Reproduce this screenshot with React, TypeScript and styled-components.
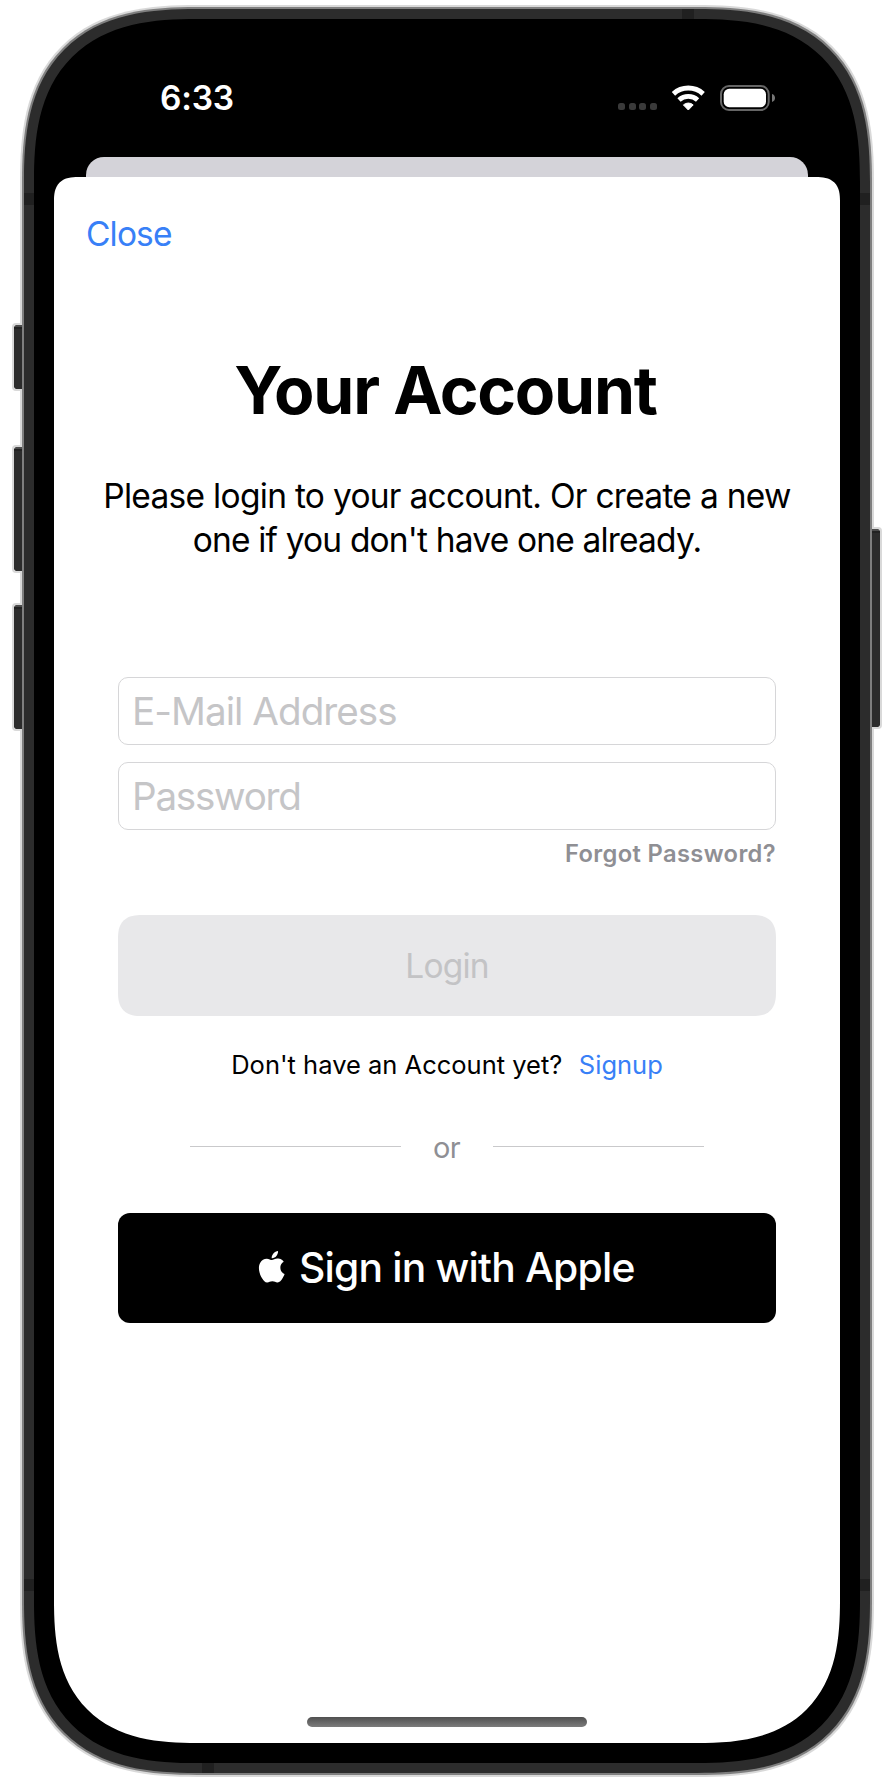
import React from 'react';
import styled, { createGlobalStyle, css } from 'styled-components';
import { SiApple } from 'react-icons/si';

const GlobalStyle = createGlobalStyle`
  *, *::before, *::after { box-sizing: border-box; }
  body { margin: 0; background: #fff; }
  #root { font-family: Inter, 'Liberation Sans', sans-serif; }
  button { font: inherit; letter-spacing: inherit; border: 0; padding: 0; background: none; cursor: pointer; }
`;

const blue = '#3880f7';

/* ---------- device hardware ---------- */

const smooth = (r: number) => css`
  border-radius: ${r * 0.8}px;
  @supports (corner-shape: superellipse(1.38)) {
    border-radius: ${r}px;
    corner-shape: superellipse(1.38);
  }
`;

const Page = styled.main`
  display: flex;
  padding: 5px 20px 2px;
`;

const Device = styled.div`
  position: relative;
  display: flex;
  width: 854px;
  height: 1772px;
  padding: 2px;
  background: #d9d9d9;
  ${smooth(177)}
`;

const Rim = styled.div`
  display: flex;
  flex: 1;
  padding: 2px;
  background: #7f7f7f;
  ${smooth(175)}
`;

const Frame = styled.div`
  position: relative;
  display: flex;
  flex: 1;
  padding: 10px;
  background: #2c2c2c;
  ${smooth(173)}
`;

const Bezel = styled.div`
  display: flex;
  flex-direction: column;
  flex: 1;
  padding: 0 20px 20px;
  background: #000;
  ${smooth(163)}
`;

const Antenna = styled.i<{ $edge: 'top' | 'right' | 'bottom' | 'left'; $at: number }>`
  position: absolute;
  background: #202020;
  ${({ $edge, $at }) =>
    $edge === 'top' || $edge === 'bottom'
      ? css`${$edge}: 0; left: ${$at}px; width: 12px; height: 10px;`
      : css`${$edge}: 0; top: ${$at}px; width: 10px; height: 12px;`}
`;

const SideKey = styled.i<{ $side: 'left' | 'right'; $top: number; $height: number }>`
  position: absolute;
  top: ${p => p.$top}px;
  ${p => p.$side}: -8px;
  width: 10px;
  height: ${p => p.$height}px;
  border: 2px solid #d9d9d9;
  background: linear-gradient(#4c4c4c 0 2px, #222 2px 4px, #2c2c2c 4px) padding-box;
  ${p =>
    p.$side === 'left'
      ? css`border-right: 0; border-radius: 4px 0 0 4px;`
      : css`border-left: 0; border-radius: 0 4px 4px 0;`}
`;

/* ---------- status bar ---------- */

const StatusBar = styled.header`
  display: flex;
  justify-content: space-between;
  align-items: flex-start;
  height: 138px;
  padding: 58px 65px 0 106px;
  color: #fff;
`;

const Clock = styled.time`
  font-size: 33.5px;
  font-weight: 600;
  line-height: 43px;
  letter-spacing: -0.2px;
`;

const StatusIcons = styled.div`
  display: flex;
  align-items: flex-start;
  margin-top: 7px;
`;

const SignalDots = styled.div`
  display: flex;
  gap: 3.7px;
  margin: 19px 14px 0 0;
`;

const SignalDot = styled.i`
  width: 7px;
  height: 7px;
  border-radius: 2.5px;
  background: #3a3a3a;
`;

const WifiIcon = styled.svg`
  margin: 0.5px 14px 0 0;
`;

const BatteryIcon = styled.svg`
  margin-top: 0.5px;
`;

/* ---------- sheet ---------- */

const SheetBehind = styled.div`
  height: 20px;
  margin: 0 32px;
  background: #d4d3d9;
  border-radius: 18px 18px 0 0;
`;

const Sheet = styled.section`
  display: flex;
  flex-direction: column;
  align-items: center;
  flex: 1;
  padding-top: 35px;
  background: #fff;
  border-radius: 20px 20px 112px 112px;
  @supports (corner-shape: superellipse(1.38)) {
    border-radius: 24px 24px 143px 143px;
    corner-shape: superellipse(1.38);
  }
`;

const CloseButton = styled.button`
  && {
    align-self: flex-start;
    margin-left: 32px;
    color: ${blue};
    font-size: 33.5px;
    line-height: 45px;
    letter-spacing: -0.85px;
  }
`;

const Title = styled.h1`
  margin: 93px 0 0;
  padding-right: 3px;
  font-size: 66px;
  font-weight: 700;
  line-height: 80px;
  letter-spacing: -1.24px;
`;

const Intro = styled.p`
  margin: 44px 0 0;
  font-size: 33.5px;
  line-height: 44px;
  text-align: center;
  white-space: nowrap;
`;

const IntroLine = styled.span<{ $spacing: number }>`
  display: block;
  letter-spacing: ${p => p.$spacing}px;
`;

const Form = styled.form`
  display: flex;
  flex-direction: column;
  width: 658px;
  margin: 115px 0 0;
`;

const Field = styled.input<{ $spacing: number }>`
  height: 68px;
  padding: 0 13px 1px;
  border: 1px solid #d6d6d8;
  border-radius: 10px;
  outline: 0;
  background: #fff;
  color: #000;
  font: 400 38.6px Inter, 'Liberation Sans', sans-serif;
  letter-spacing: ${p => p.$spacing}px;

  & + & { margin-top: 17px; }
  &::placeholder { color: #c5c5c7; opacity: 1; }
`;

const ForgotButton = styled.button`
  && {
    align-self: flex-end;
    margin: 10px 0 0;
    color: #8f8f94;
    font-size: 23.7px;
    font-weight: 600;
    line-height: 28px;
    letter-spacing: 0.36px;
  }
`;

const LoginButton = styled.button`
  && {
    height: 101px;
    margin-top: 47px;
    background: #e8e8ea;
    color: #c3c3c5;
    font-size: 33.5px;
    letter-spacing: -0.8px;
    ${smooth(24)}
  }
`;

const SignupRow = styled.p`
  display: flex;
  gap: 16.5px;
  margin: 33px 0 0;
  font-size: 25.5px;
  line-height: 32px;
`;

const SignupLink = styled.button`
  color: ${blue};
`;

const Divider = styled.div`
  display: flex;
  justify-content: space-between;
  width: 514px;
  margin-top: 48px;
  color: #8f8f94;
  line-height: 38px;

  &::before, &::after {
    content: '';
    width: 211px;
    height: 1px;
    margin-top: 17px;
    background: #c9c9cb;
  }
`;

const DividerLabel = styled.span`
  padding-right: 1px;
  font-size: 29px;
  letter-spacing: -0.6px;
`;

const AppleButton = styled.button`
  && {
    display: flex;
    justify-content: center;
    width: 658px;
    height: 110px;
    margin-top: 46px;
    padding-right: 3px;
    border-radius: 12px;
    background: #000;
    color: #fff;
    font-size: 40.8px;
    font-weight: 500;
    line-height: 108px;
    letter-spacing: -0.8px;
  }
`;

const AppleMark = styled(SiApple)`
  width: 31.5px;
  height: 31.5px;
  margin: 38px 11px 0 0;
`;

const HomeIndicator = styled.div`
  width: 280px;
  height: 10px;
  margin: auto 0 16px;
  border-radius: 5px;
  background: linear-gradient(#505050, #7c7c7c);
`;

export default function App() {
  return (
    <Page>
      <GlobalStyle />
      <Device>
        <Rim>
          <Frame>
            <Antenna $edge="top" $at={658} />
            <Antenna $edge="left" $at={184} />
            <Antenna $edge="right" $at={184} />
            <Antenna $edge="left" $at={1570} />
            <Antenna $edge="right" $at={1570} />
            <Antenna $edge="bottom" $at={178} />
            <Bezel>
              <StatusBar>
                <Clock>6:33</Clock>
                <StatusIcons>
                  <SignalDots>
                    <SignalDot /><SignalDot /><SignalDot /><SignalDot />
                  </SignalDots>
                  <WifiIcon width="35" height="27" viewBox="0 0 35 27" fill="none" stroke="#fff">
                    <path d="M2.45 8.8A22.2 22.2 0 0 1 32.15 8.8" strokeWidth="5" />
                    <path d="M8 15A13.9 13.9 0 0 1 26.6 15" strokeWidth="4.8" />
                    <path d="M12.4 19.9A7.4 7.4 0 0 1 22.2 19.9L17.3 25Z" fill="#fff" strokeWidth="1" strokeLinejoin="round" />
                  </WifiIcon>
                  <BatteryIcon width="55" height="26" viewBox="0 0 55 26">
                    <rect x="1" y="1" width="47.7" height="24" rx="8" fill="none" stroke="#666" strokeWidth="2" />
                    <rect x="3.7" y="3.8" width="42.3" height="18.4" rx="5.5" fill="#fff" />
                    <path d="M52 9c2 .6 3 2.2 3 4s-1 3.4-3 4z" fill="#777" />
                  </BatteryIcon>
                </StatusIcons>
              </StatusBar>
              <SheetBehind />
              <Sheet>
                <CloseButton>Close</CloseButton>
                <Title>Your Account</Title>
                <Intro>
                  <IntroLine $spacing={-0.71}>Please login to your account. Or create a new</IntroLine>
                  <IntroLine $spacing={-0.82}>one if you don't have one already.</IntroLine>
                </Intro>
                <Form onSubmit={e => e.preventDefault()}>
                  <Field $spacing={-0.95} type="email" placeholder="E-Mail Address" />
                  <Field $spacing={-1.25} type="password" placeholder="Password" />
                  <ForgotButton type="button">Forgot Password?</ForgotButton>
                  <LoginButton disabled>Login</LoginButton>
                </Form>
                <SignupRow>
                  <span>Don't have an Account yet?</span>
                  <SignupLink>Signup</SignupLink>
                </SignupRow>
                <Divider>
                  <DividerLabel>or</DividerLabel>
                </Divider>
                <AppleButton>
                  <AppleMark />
                  Sign in with Apple
                </AppleButton>
                <HomeIndicator />
              </Sheet>
            </Bezel>
          </Frame>
        </Rim>
        <SideKey $side="left" $top={318} $height={68} />
        <SideKey $side="left" $top={440} $height={128} />
        <SideKey $side="left" $top={598} $height={128} />
        <SideKey $side="right" $top={522} $height={202} />
      </Device>
    </Page>
  );
}
